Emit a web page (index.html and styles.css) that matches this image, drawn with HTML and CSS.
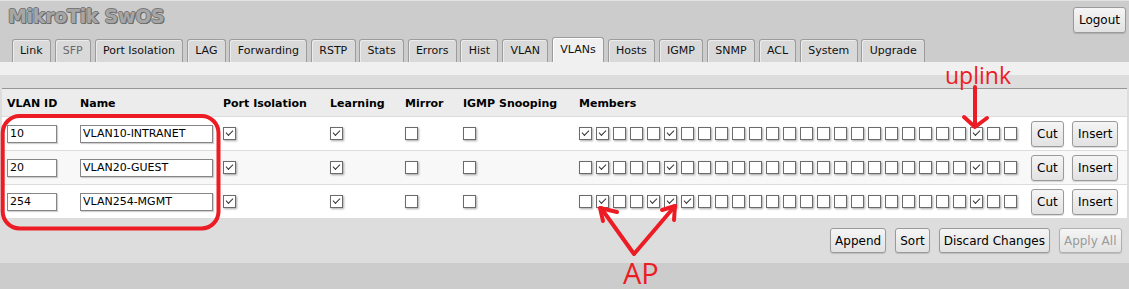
FILE: index.html
```html
<!DOCTYPE html>
<html>
<head>
<meta charset="utf-8">
<title>MikroTik SwOS</title>
<link rel="stylesheet" href="styles.css">
</head>
<body>
<div class="top">
  <div class="titlebar">
    <div class="logo">MikroTik SwOS</div>
    <button class="btn logout">Logout</button>
  </div>
  <div class="tabs">
    <span class="tab">Link</span>
    <span class="tab dim">SFP</span>
    <span class="tab">Port Isolation</span>
    <span class="tab">LAG</span>
    <span class="tab">Forwarding</span>
    <span class="tab">RSTP</span>
    <span class="tab">Stats</span>
    <span class="tab">Errors</span>
    <span class="tab">Hist</span>
    <span class="tab">VLAN</span>
    <span class="tab active">VLANs</span>
    <span class="tab">Hosts</span>
    <span class="tab">IGMP</span>
    <span class="tab">SNMP</span>
    <span class="tab">ACL</span>
    <span class="tab">System</span>
    <span class="tab">Upgrade</span>
  </div>
</div>
<div class="strip"></div>
<div class="panel">
  <table class="vlans">
    <colgroup>
      <col class="c-id"><col class="c-name"><col class="c-iso"><col class="c-learn"><col class="c-mirror"><col class="c-igmp"><col class="c-members"><col class="c-cut"><col class="c-ins">
    </colgroup>
    <thead>
      <tr><th>VLAN ID</th><th>Name</th><th>Port Isolation</th><th>Learning</th><th>Mirror</th><th>IGMP Snooping</th><th>Members</th><th></th><th></th></tr>
    </thead>
    <tbody>
      <tr>
        <td><input class="txt id" type="text" value="10"></td>
        <td><input class="txt name" type="text" value="VLAN10-INTRANET"></td>
        <td><span class="cb on"></span></td>
        <td><span class="cb on"></span></td>
        <td><span class="cb"></span></td>
        <td><span class="cb"></span></td>
        <td><div class="members"><span class="cb on"></span><span class="cb on"></span><span class="cb"></span><span class="cb"></span><span class="cb"></span><span class="cb on"></span><span class="cb"></span><span class="cb"></span><span class="cb"></span><span class="cb"></span><span class="cb"></span><span class="cb"></span><span class="cb"></span><span class="cb"></span><span class="cb"></span><span class="cb"></span><span class="cb"></span><span class="cb"></span><span class="cb"></span><span class="cb"></span><span class="cb"></span><span class="cb"></span><span class="cb"></span><span class="cb on"></span><span class="cb"></span><span class="cb"></span></div></td>
        <td><button class="btn">Cut</button></td>
        <td><button class="btn">Insert</button></td>
      </tr>
      <tr class="alt">
        <td><input class="txt id" type="text" value="20"></td>
        <td><input class="txt name" type="text" value="VLAN20-GUEST"></td>
        <td><span class="cb on"></span></td>
        <td><span class="cb on"></span></td>
        <td><span class="cb"></span></td>
        <td><span class="cb"></span></td>
        <td><div class="members"><span class="cb"></span><span class="cb on"></span><span class="cb"></span><span class="cb"></span><span class="cb"></span><span class="cb on"></span><span class="cb"></span><span class="cb"></span><span class="cb"></span><span class="cb"></span><span class="cb"></span><span class="cb"></span><span class="cb"></span><span class="cb"></span><span class="cb"></span><span class="cb"></span><span class="cb"></span><span class="cb"></span><span class="cb"></span><span class="cb"></span><span class="cb"></span><span class="cb"></span><span class="cb"></span><span class="cb on"></span><span class="cb"></span><span class="cb"></span></div></td>
        <td><button class="btn">Cut</button></td>
        <td><button class="btn">Insert</button></td>
      </tr>
      <tr>
        <td><input class="txt id" type="text" value="254"></td>
        <td><input class="txt name" type="text" value="VLAN254-MGMT"></td>
        <td><span class="cb on"></span></td>
        <td><span class="cb on"></span></td>
        <td><span class="cb"></span></td>
        <td><span class="cb"></span></td>
        <td><div class="members"><span class="cb"></span><span class="cb on"></span><span class="cb"></span><span class="cb"></span><span class="cb on"></span><span class="cb on"></span><span class="cb on"></span><span class="cb"></span><span class="cb"></span><span class="cb"></span><span class="cb"></span><span class="cb"></span><span class="cb"></span><span class="cb"></span><span class="cb"></span><span class="cb"></span><span class="cb"></span><span class="cb"></span><span class="cb"></span><span class="cb"></span><span class="cb"></span><span class="cb"></span><span class="cb"></span><span class="cb on"></span><span class="cb"></span><span class="cb"></span></div></td>
        <td><button class="btn">Cut</button></td>
        <td><button class="btn">Insert</button></td>
      </tr>
    </tbody>
  </table>
  <div class="actions">
    <button class="btn act">Append</button>
    <button class="btn act">Sort</button>
    <button class="btn act">Discard Changes</button>
    <button class="btn act disabled">Apply All</button>
  </div>
</div>

<svg class="notes" width="1129" height="289" viewBox="0 0 1129 289">
  <rect x="2.7" y="116" width="215.8" height="112.5" rx="17" ry="17" fill="none" stroke="#ed1c24" stroke-width="4"/>
  <path d="M975 87 L975 126 M964 117 L975 127 L987 118" fill="none" stroke="#ed1c24" stroke-width="4" stroke-linejoin="round" stroke-linecap="round"/>
  <path d="M601 208 L634 254 L675 206" fill="none" stroke="#ed1c24" stroke-width="4" stroke-linejoin="round" stroke-linecap="round"/>
  <path d="M603 221 L600 208 L617 212 M662 210 L675 206 L674 220" fill="none" stroke="#ed1c24" stroke-width="4" stroke-linejoin="round" stroke-linecap="round"/>
</svg>
<div class="note uplink">uplink</div>
<div class="note ap">AP</div>
</body>
</html>
```

FILE: styles.css
```css
html, body {
  margin: 0;
  padding: 0;
}
body {
  background: #cccccc;
  font-family: "DejaVu Sans", Verdana, sans-serif;
  font-size: 11px;
  color: #000;
  width: 1129px;
  height: 289px;
  overflow: hidden;
  position: relative;
}

.top {
  border-top: 1px solid #e2e2e2;
  height: 61px;
  display: flex;
  flex-direction: column;
}
.titlebar {
  height: 36px;
  display: flex;
  justify-content: space-between;
  align-items: flex-start;
}
.logo {
  padding: 6px 0 0 8px;
  font-size: 19px;
  line-height: 19px;
  font-weight: bold;
  letter-spacing: -0.3px;
  color: #a6a6a6;
  text-shadow: 1px 0 0 #707070, -1px 0 0 #7a7a7a, 0 1px 0 #707070, 0 -1px 0 #7a7a7a, 1px 1px 0 #5a5a5a;
}

.btn {
  font-family: "DejaVu Sans", Verdana, sans-serif;
  font-size: 12px;
  color: #000;
  height: 26px;
  padding: 0 5px;
  border: 1px solid #9a9a9a;
  border-radius: 3px;
  background: linear-gradient(#f5f5f5, #e2e2e2);
  box-shadow: 0 1px 1px rgba(0, 0, 0, 0.15);
  margin: 0;
  cursor: pointer;
}
.logout {
  margin: 6px 3px 0 0;
  padding: 0 5px;
}

.tabs {
  height: 25px;
  display: flex;
  align-items: flex-end;
  gap: 3.7px;
  padding-left: 11.7px;
}
.tab {
  display: block;
  height: 22px;
  line-height: 13px;
  padding: 4px 7.3px 0;
  box-sizing: border-box;
  height: 23px;
  border: 1px solid #9c9c9c;
  border-bottom: none;
  border-radius: 3px 3px 0 0;
  background: #d9d9d9;
  box-shadow: inset 1px 1px 0 #ececec;
  color: #111;
  white-space: nowrap;
}
.tab.dim {
  color: #6a6a6a;
}
.tab.active {
  height: 25px;
  padding-top: 5px;
  background: #f0f0f0;
  box-shadow: inset 1px 1px 0 #fff;
}

.strip {
  height: 13px;
  background: #f0f0f0;
}
.panel {
  background: #dddddd;
  padding: 13px 2px 10px;
}

.vlans {
  width: 1125px;
  table-layout: fixed;
  border-collapse: separate;
  border-spacing: 0;
  border-top: 1px solid #969696;
}
.c-id { width: 73px; }
.c-name { width: 143px; }
.c-iso { width: 107px; }
.c-learn { width: 75px; }
.c-mirror { width: 58px; }
.c-igmp { width: 116px; }
.c-members { width: 452px; }
.c-cut { width: 41px; }
.c-ins { width: 60px; }

.vlans th {
  height: 27px;
  box-sizing: border-box;
  padding: 2px 0 0 5px;
  text-align: left;
  font-weight: bold;
  background: #ececec;
  white-space: nowrap;
  vertical-align: middle;
}
.vlans td {
  height: 34px;
  box-sizing: border-box;
  padding: 0 0 0 5px;
  border-top: 1px solid #dcdcdc;
  background: #fff;
  vertical-align: middle;
}
.vlans tr.alt td {
  background: #f8f8f8;
}

.txt {
  display: block;
  box-sizing: border-box;
  height: 18px;
  margin: 0;
  padding: 0 2px;
  border: 1px solid #858585;
  background: #fff;
  box-shadow: 1px 1px 1px rgba(0, 0, 0, 0.18);
  font-family: "DejaVu Sans", Verdana, sans-serif;
  font-size: 11px;
  color: #000;
  outline: none;
}
.txt.id { width: 50px; }
.txt.name { width: 133px; }

.cb {
  display: block;
  width: 13px;
  height: 13px;
  box-sizing: border-box;
  border: 1px solid #6b6b6b;
  background: #fff;
  box-shadow: 1px 1px 2px rgba(0, 0, 0, 0.35);
  position: relative;
}
.cb.on::after {
  content: "";
  position: absolute;
  left: 2px;
  top: 2px;
  width: 6px;
  height: 3px;
  border-left: 1.5px solid #333;
  border-bottom: 1.5px solid #333;
  transform: rotate(-45deg);
}
.members {
  display: flex;
  gap: 4px;
  align-items: center;
}

.actions {
  display: flex;
  justify-content: flex-end;
  gap: 9px;
  margin-top: 10px;
  padding-right: 5.5px;
}
.btn.act {
  height: 25px;
  padding: 0 4px;
}
.btn.disabled {
  color: #9a9a9a;
  border-color: #b0b0b0;
}

.notes {
  position: absolute;
  left: 0;
  top: 0;
  pointer-events: none;
}
.note {
  position: absolute;
  font-family: "Open Sans", sans-serif;
  color: #ed1c24;
  line-height: 1;
  pointer-events: none;
}
.uplink {
  left: 945px;
  top: 63.6px;
  font-size: 23px;
}
.ap {
  left: 623px;
  top: 258px;
  font-size: 29px;
}
```
